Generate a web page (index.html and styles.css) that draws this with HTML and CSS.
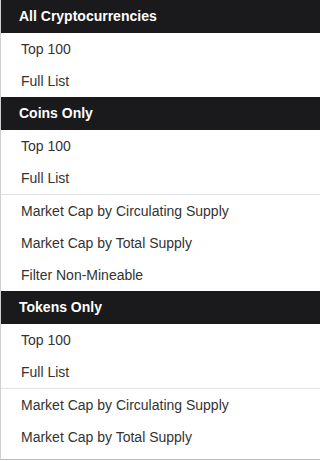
FILE: index.html
```html
<!DOCTYPE html>
<html>
<head>
<meta charset="utf-8">
<link rel="stylesheet" href="styles.css">
</head>
<body>
<div class="menu">
  <div class="header">All Cryptocurrencies</div>
  <a class="item">Top 100</a>
  <a class="item">Full List</a>
  <div class="header">Coins Only</div>
  <a class="item">Top 100</a>
  <a class="item">Full List</a>
  <div class="divider"></div>
  <a class="item">Market Cap by Circulating Supply</a>
  <a class="item">Market Cap by Total Supply</a>
  <a class="item">Filter Non-Mineable</a>
  <div class="header">Tokens Only</div>
  <a class="item">Top 100</a>
  <a class="item">Full List</a>
  <div class="divider"></div>
  <a class="item">Market Cap by Circulating Supply</a>
  <a class="item">Market Cap by Total Supply</a>
</div>
</body>
</html>
```
FILE: styles.css
```css
html, body {
  margin: 0;
  padding: 0;
  background: #fff;
  overflow: hidden;
}
.menu {
  box-sizing: border-box;
  display: flex;
  flex-direction: column;
  width: 100%;
  padding-bottom: 6px;
  border-left: 1px solid #cfcfcf;
  border-bottom: 1px solid #b8b8b8;
  font-family: "Liberation Sans", Arial, sans-serif;
  font-size: 14px;
}
.header {
  height: 33px;
  line-height: 33px;
  padding-left: 18px;
  background: #1a1a1c;
  color: #fff;
  font-weight: bold;
}
.item {
  height: 32px;
  line-height: 32px;
  padding-left: 20px;
  color: #333;
}
.divider {
  height: 1px;
  background: #e2e2e2;
}
```
